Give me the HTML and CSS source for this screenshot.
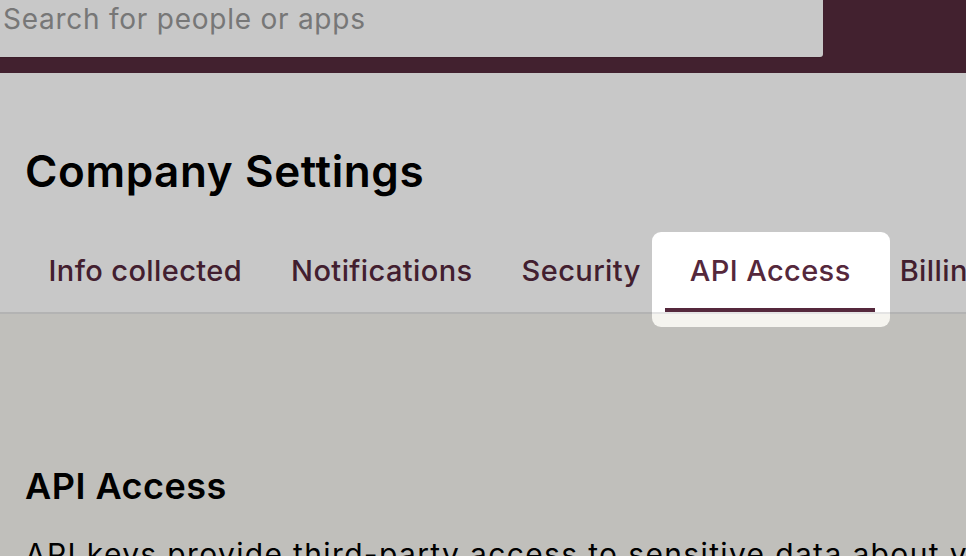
FILE: index.html
```html
<!DOCTYPE html>
<html lang="en">
<head>
<meta charset="utf-8">
<title>Company Settings</title>
<link rel="stylesheet" href="styles.css">
</head>
<body>
<header class="topbar">
  <div class="search">
    <span class="search-placeholder">Search for people or apps</span>
  </div>
</header>
<section class="settings-head">
  <h1 class="page-title">Company Settings</h1>
  <nav class="tabs">
    <a class="tab">Info collected</a>
    <a class="tab">Notifications</a>
    <a class="tab">Security</a>
    <a class="tab tab-active">API Access</a>
    <a class="tab">Billing</a>
  </nav>
</section>
<main class="content">
  <h2 class="section-title">API Access</h2>
  <p class="section-text">API keys provide third-party access to sensitive data about your company and its employees.</p>
</main>
<div class="spotlight"></div>
</body>
</html>
```
FILE: styles.css
```css
* { box-sizing: border-box; }
html, body {
  margin: 0;
  padding: 0;
  width: 966px;
  height: 556px;
  overflow: hidden;
}
body {
  font-family: Inter, "Liberation Sans", sans-serif;
  background: #f5f4ef;
  position: relative;
}
.topbar {
  height: 73px;
  background: #552b3c;
  display: flex;
  align-items: flex-start;
}
.search {
  width: 823px;
  height: 57px;
  background: #ffffff;
  border-bottom-right-radius: 3px;
  box-shadow: 0 1px 1px rgba(0,0,0,0.12);
  display: flex;
  align-items: flex-start;
  padding-left: 3px;
}
.search-placeholder {
  font-size: 28px;
  line-height: 36px;
  margin-top: 1px;
  color: #989898;
  letter-spacing: 0.75px;
  white-space: nowrap;
}
.settings-head {
  background: #ffffff;
  padding-top: 72px;
}
.page-title {
  margin: 0 0 0 25px;
  font-size: 44px;
  line-height: 52px;
  font-weight: 600;
  color: #000;
  letter-spacing: 0.6px;
}
.tabs {
  display: flex;
  margin-top: 56px;
  padding-left: 24px;
  border-bottom: 2px solid #e4e4e4;
  white-space: nowrap;
  overflow: hidden;
}
.tab {
  display: block;
  flex: none;
  padding: 0 24.5px 19px;
  font-size: 29px;
  line-height: 36px;
  font-weight: 500;
  letter-spacing: 0.4px;
  color: #55283c;
  border-bottom: 4px solid transparent;
}
.tab-active {
  border-bottom-color: #55283c;
}
.content {
  padding: 150px 0 0 25px;
}
.section-title {
  margin: 0;
  font-size: 36px;
  line-height: 44px;
  font-weight: 600;
  color: #000;
  letter-spacing: 0.5px;
}
.section-text {
  margin: 26px 0 0;
  font-size: 30px;
  line-height: 40px;
  color: #000;
  letter-spacing: 1.35px;
  white-space: nowrap;
}
.spotlight {
  position: absolute;
  left: 652px;
  top: 232px;
  width: 238px;
  height: 95px;
  border-radius: 9px;
  box-shadow: 0 0 0 2000px rgba(0,0,0,0.216);
  pointer-events: none;
}
```
